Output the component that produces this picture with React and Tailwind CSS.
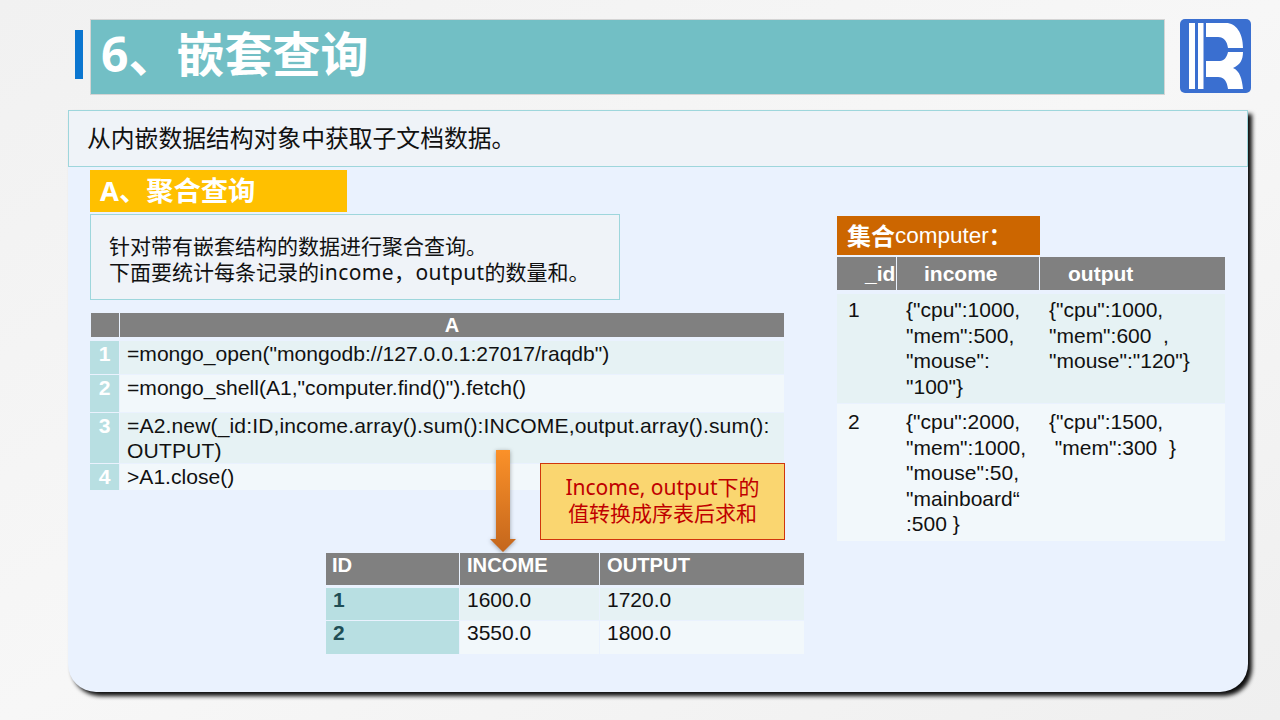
const CJK = "font-['Noto_Sans','Noto_Sans_CJK_SC',sans-serif]"
const ARIAL = "font-['Liberation_Sans','Noto_Sans_CJK_SC',sans-serif]"

const CODE_ROWS = [
  { n: 1, h: 'h-[33px]', bg: 'bg-[#e6f2f4]', lines: ['=mongo_open("mongodb://127.0.0.1:27017/raqdb")'] },
  { n: 2, h: 'h-[37px]', bg: 'bg-[#f2f8fb]', lines: ['=mongo_shell(A1,"computer.find()").fetch()'] },
  { n: 3, h: 'h-[50px]', bg: 'bg-[#e6f2f4] tracking-[0.12px]', lines: ['=A2.new(_id:ID,income.array().sum():INCOME,output.array().sum():', 'OUTPUT)'] },
  { n: 4, h: 'h-[26px]', bg: 'bg-[#f2f8fb]', lines: ['>A1.close()'] },
]

const RESULT_ROWS = [
  { id: 1, h: 'h-[32px]', bg: 'bg-[#e6f2f4]', income: '1600.0', output: '1720.0' },
  { id: 2, h: 'h-[33px]', bg: 'bg-[#f2f8fb]', income: '3550.0', output: '1800.0' },
]

const COMPUTER_ROWS = [
  {
    id: 1,
    h: 'h-[109px]',
    pad: 'pt-[3px]',
    bg: 'bg-[#e6f2f4]',
    income: ['{"cpu":1000,', '"mem":500,', '"mouse":', '"100"}'],
    output: ['{"cpu":1000,', '"mem":600  ,', '"mouse":"120"}'],
  },
  {
    id: 2,
    h: 'h-[137px]',
    pad: 'pt-[5px]',
    bg: 'bg-[#f2f8fb]',
    income: ['{"cpu":2000,', '"mem":1000,', '"mouse":50,', '"mainboard“', ':500 }'],
    output: ['{"cpu":1500,', '\u00a0"mem":300  }'],
  },
]

function Logo() {
  return (
    <svg width="71" height="74" viewBox="0 0 71 74" className="shrink-0">
      <rect x="0" y="0" width="71" height="74" rx="5" fill="#3a6fd0" />
      <rect x="9" y="4" width="6" height="66" fill="#fff" />
      <rect x="18" y="4" width="5.5" height="66" fill="#fff" />
      <path
        d="M26 4H46C56 4 63 14 63 29H48C47 22 44 18 38 18H26Z M26 42H40C44 42 47 38 48 33H63C63 41 60 46 53 49C60 52 62 60 63 70H48C47 62 44 58 38 58H26Z"
        fill="#fff"
      />
    </svg>
  )
}

function Arrow() {
  return (
    <svg width="34" height="106" viewBox="0 0 34 106" className="absolute left-[418px] top-[339px] drop-shadow-[0_1px_2px_rgba(0,0,0,0.35)]">
      <defs>
        <linearGradient id="arrowFill" x1="0" y1="0" x2="0" y2="1">
          <stop offset="0" stopColor="#fb9129" />
          <stop offset="1" stopColor="#c4661c" />
        </linearGradient>
      </defs>
      <path d="M10 1H24V90H30L17 103L4 90H10Z" fill="url(#arrowFill)" />
    </svg>
  )
}

export default function App() {
  return (
    <div className="w-[1280px] h-[720px] overflow-hidden bg-gradient-to-br from-[#f1f1f1] via-[#f7f7f7] to-[#efefef]">
      {/* Title row */}
      <div className="flex items-start pl-[75px] pt-[19px]">
        <div className="w-[8px] h-[49px] mt-[11px] bg-[#0b76d0]" />
        <div className={`w-[1075px] h-[76px] ml-[7px] pl-[10px] flex items-center bg-[#72bfc5] border border-[#d4d4d4] text-white font-bold text-[48px] ${CJK}`}>
          <span className="leading-none -mt-[6px]">6、嵌套查询</span>
        </div>
        <div className="ml-[15px]">
          <Logo />
        </div>
      </div>

      {/* Slide panel */}
      <div className="relative w-[1180px] h-[582px] ml-[68px] mt-[15px] bg-[#eaf2fe] rounded-b-[28px] shadow-[4px_4px_4px_rgba(0,0,0,0.95)]">
        <div className={`h-[57px] pl-[18px] pt-[1px] flex items-center bg-[#eff3f8] border border-[#9ed6dc] text-[23.8px] text-[#111] ${CJK}`}>
          从内嵌数据结构对象中获取子文档数据。
        </div>

        <div className="flex pl-[22px]">
          {/* Left column */}
          <div className="w-[747px]">
            <div className={`w-[257px] h-[42px] mt-[3px] pl-[10px] flex items-center bg-[#ffc000] text-white font-bold text-[27.3px] ${CJK}`}>
              A、聚合查询
            </div>
            <div className={`w-[530px] h-[86px] mt-[2px] pl-[18px] pt-[4px] flex flex-col justify-center bg-[#eff3f8] border border-[#9ed6dc] text-[21px] leading-[26px] text-[#111] ${CJK}`}>
              <div>针对带有嵌套结构的数据进行聚合查询。</div>
              <div>
                下面要统计每条记录的<span className="tracking-[0.4px]">income，output</span>的数量和。
              </div>
            </div>

            {/* Script grid */}
            <div className={`w-[694px] mt-[13px] text-[21.1px] leading-[25px] text-[#111] ${ARIAL}`}>
              <div className="flex gap-px h-[24px] mb-[4px] ml-px">
                <div className="w-[28px] bg-[#808080]" />
                <div className="flex-1 bg-[#808080] text-white font-bold text-center text-[20px] leading-[25px]">A</div>
              </div>
              <div className="flex flex-col gap-px">
                {CODE_ROWS.map((row) => (
                  <div key={row.n} className={`flex gap-px ${row.h}`}>
                    <div className="w-[29px] shrink-0 bg-[#b8dfe2] text-white font-bold text-center">{row.n}</div>
                    <div className={`flex-1 min-w-0 pl-[7px] whitespace-nowrap ${row.bg}`}>
                      {row.lines.map((line) => (
                        <div key={line}>{line}</div>
                      ))}
                    </div>
                  </div>
                ))}
              </div>
            </div>

            {/* Result table */}
            <div className={`w-[478px] ml-[236px] mt-[63px] text-[21px] leading-[23px] text-[#111] ${ARIAL}`}>
              <div className="flex gap-px h-[32px] mb-[3px] text-white font-bold text-[20.2px] leading-[24px]">
                <div className="w-[133px] pl-[6px] bg-[#808080]">ID</div>
                <div className="w-[139px] pl-[7px] bg-[#808080]">INCOME</div>
                <div className="flex-1 pl-[7px] bg-[#808080]">OUTPUT</div>
              </div>
              <div className="flex flex-col gap-px">
                {RESULT_ROWS.map((row) => (
                  <div key={row.id} className={`flex gap-px ${row.h}`}>
                    <div className="w-[133px] pl-[7px] bg-[#b8dfe2] text-[#1f4e55] font-bold">{row.id}</div>
                    <div className={`w-[139px] pl-[7px] ${row.bg}`}>{row.income}</div>
                    <div className={`flex-1 pl-[7px] ${row.bg}`}>{row.output}</div>
                  </div>
                ))}
              </div>
            </div>
          </div>

          {/* Right column */}
          <div className="w-[388px] mt-[49px]">
            <div className={`w-[203px] h-[39px] pl-[10px] flex items-center bg-[#cc6600] text-white text-[22.5px] ${ARIAL}`}>
              <span className={`font-bold text-[24px] ${CJK}`}>集合</span>computer<span className={`font-bold ${CJK}`}>：</span>
            </div>
            <div className={`mt-[2px] text-[21px] leading-[25.6px] text-[#111] ${ARIAL}`}>
              <div className="flex gap-px h-[33px] mb-[4px] text-white font-bold text-[21px] leading-[33px]">
                <div className="w-[59px] pl-[28px] bg-[#808080]">_id</div>
                <div className="w-[142px] pl-[27px] bg-[#808080]">income</div>
                <div className="flex-1 pl-[28px] bg-[#808080]">output</div>
              </div>
              <div className="flex flex-col gap-px">
                {COMPUTER_ROWS.map((row) => (
                  <div key={row.id} className={`flex gap-px ${row.h} ${row.bg} ${row.pad}`}>
                    <div className="w-[59px] pl-[11px]">{row.id}</div>
                    <div className="w-[142px] pl-[9px]">
                      {row.income.map((line) => (
                        <div key={line}>{line}</div>
                      ))}
                    </div>
                    <div className="flex-1 pl-[9px]">
                      {row.output.map((line) => (
                        <div key={line} className="whitespace-pre">{line}</div>
                      ))}
                    </div>
                  </div>
                ))}
              </div>
            </div>
          </div>
        </div>

        {/* Overlays on the script grid */}
        <Arrow />
        <div className={`absolute left-[472px] top-[353px] w-[245px] h-[77px] pb-[3px] flex flex-col items-center justify-center bg-[#fad670] border border-[#d0360c] text-[#c00000] text-[21px] leading-[26px] ${CJK}`}>
          <div>Income, output下的</div>
          <div>值转换成序表后求和</div>
        </div>
      </div>
    </div>
  )
}
